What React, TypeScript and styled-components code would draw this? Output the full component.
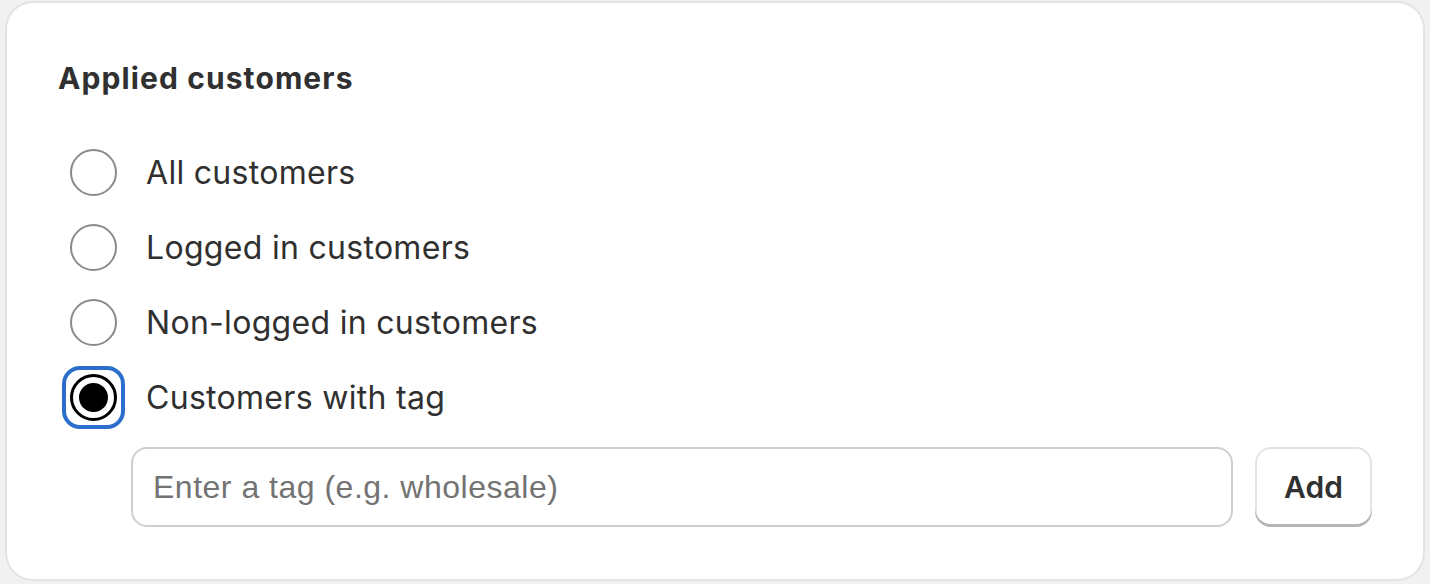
import { useState } from 'react'
import { styled, createGlobalStyle } from 'styled-components'

const GlobalStyle = createGlobalStyle`
  html, body {
    margin: 0;
    padding: 0;
    background: #f1f1f1;
  }
  body {
    font-family: Inter, 'Noto Sans', sans-serif;
    color: #303030;
  }
`

const options = ['All customers', 'Logged in customers', 'Non-logged in customers', 'Customers with tag']

export default function App() {
  const [selected, setSelected] = useState(3)
  const [tag, setTag] = useState('')

  return (
    <>
      <GlobalStyle />
      <StyledCard>
        <StyledTitle>Applied customers</StyledTitle>
        <StyledOptionList>
          {options.map((label, index) => (
            <StyledOption key={label} onClick={() => setSelected(index)}>
              <StyledRadio $checked={selected === index} $focused={selected === index} />
              <span>{label}</span>
            </StyledOption>
          ))}
        </StyledOptionList>
        <StyledTagRow>
          <StyledInput
            placeholder="Enter a tag (e.g. wholesale)"
            value={tag}
            onChange={(e) => setTag(e.target.value)}
          />
          <StyledButton>Add</StyledButton>
        </StyledTagRow>
      </StyledCard>
    </>
  )
}

const StyledCard = styled.div`
  margin: 3px 7px 5px;
  height: 576px;
  box-sizing: border-box;
  padding: 55px 51px 0 51px;
  background: #ffffff;
  border-radius: 26px;
  box-shadow: 0 0 0 2px #e3e3e3;
`

const StyledTitle = styled.h2`
  margin: 0;
  font-size: 30px;
  line-height: 40px;
  font-weight: 650;
  letter-spacing: 1.1px;
  color: #303030;
`

const StyledOptionList = styled.div`
  display: flex;
  flex-direction: column;
  gap: 15px;
  margin-top: 44px;
  padding-left: 12px;
`

const StyledOption = styled.label`
  display: flex;
  align-items: center;
  gap: 29px;
  height: 60px;
  font-size: 32px;
  letter-spacing: 0.3px;
  color: #303030;
  cursor: pointer;
`

const StyledRadio = styled.span<{ $checked: boolean; $focused: boolean }>`
  position: relative;
  box-sizing: border-box;
  width: 47px;
  height: 47px;
  flex-shrink: 0;
  border-radius: 50%;
  background: #fff;
  border: ${({ $checked }) => ($checked ? '3px solid #000' : '2px solid #8a8a8a')};

  &::after {
    content: '';
    display: ${({ $checked }) => ($checked ? 'block' : 'none')};
    position: absolute;
    inset: 6px;
    border-radius: 50%;
    background: #000;
  }

  &::before {
    content: '';
    display: ${({ $focused }) => ($focused ? 'block' : 'none')};
    position: absolute;
    inset: -11px;
    border: 4px solid #2c6ecb;
    border-radius: 18px;
  }
`

const StyledTagRow = styled.div`
  display: flex;
  gap: 22px;
  margin-top: 20px;
  padding-left: 73px;
`

const StyledInput = styled.input`
  flex: 1;
  height: 80px;
  box-sizing: border-box;
  padding: 0 20px;
  border: 2px solid #cfcfcf;
  border-radius: 16px;
  font-family: 'Liberation Sans', Arial, sans-serif;
  font-size: 32px;
  letter-spacing: 0.5px;
  color: #303030;
  outline: none;

  &::placeholder {
    color: #737373;
  }
`

const StyledButton = styled.button`
  width: 117px;
  height: 80px;
  border: none;
  border-radius: 16px;
  background: #fff;
  font-family: Inter, 'Noto Sans', sans-serif;
  font-size: 30px;
  font-weight: 600;
  color: #303030;
  cursor: pointer;
  box-shadow: inset 0 -3px 0 0 #b5b5b5, inset 0 0 0 2px #e3e3e3;
`
